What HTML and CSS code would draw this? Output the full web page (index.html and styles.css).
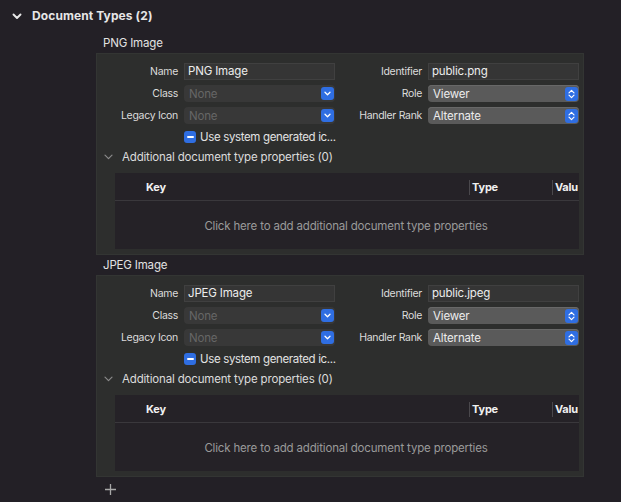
FILE: index.html
```html
<!DOCTYPE html>
<html>
<head>
<meta charset="utf-8">
<link rel="stylesheet" href="styles.css">
</head>
<body>
<div class="header">
  <svg class="hchev" width="10" height="7" viewBox="0 0 10 7"><path d="M1.5 1.5 L5 5 L8.5 1.5" fill="none" stroke="#e8e8e8" stroke-width="1.9" stroke-linecap="round" stroke-linejoin="round"/></svg>
  <span class="htitle">Document Types (2)</span>
</div>

<div class="section">
  <div class="stitle">PNG Image</div>
  <div class="panel">
    <div class="form">
      <div class="lbl">Name</div>
      <div class="tfield">PNG Image</div>
      <div class="lbl">Identifier</div>
      <div class="tfield">public.png</div>

      <div class="lbl">Class</div>
      <div class="popup dis"><span>None</span><span class="pbtn"><svg width="7" height="5" viewBox="0 0 7 5"><path d="M1 1.2 L3.5 3.7 L6 1.2" fill="none" stroke="#fff" stroke-width="1.3" stroke-linecap="round" stroke-linejoin="round"/></svg></span></div>
      <div class="lbl">Role</div>
      <div class="popup en"><span>Viewer</span><span class="pbtn"><svg width="7" height="10" viewBox="0 0 7 10"><path d="M1 3.8 L3.5 1.3 L6 3.8 M1 6.2 L3.5 8.7 L6 6.2" fill="none" stroke="#fff" stroke-width="1.2" stroke-linecap="round" stroke-linejoin="round"/></svg></span></div>

      <div class="lbl">Legacy Icon</div>
      <div class="popup dis"><span>None</span><span class="pbtn"><svg width="7" height="5" viewBox="0 0 7 5"><path d="M1 1.2 L3.5 3.7 L6 1.2" fill="none" stroke="#fff" stroke-width="1.3" stroke-linecap="round" stroke-linejoin="round"/></svg></span></div>
      <div class="lbl">Handler Rank</div>
      <div class="popup en"><span>Alternate</span><span class="pbtn"><svg width="7" height="10" viewBox="0 0 7 10"><path d="M1 3.8 L3.5 1.3 L6 3.8 M1 6.2 L3.5 8.7 L6 6.2" fill="none" stroke="#fff" stroke-width="1.2" stroke-linecap="round" stroke-linejoin="round"/></svg></span></div>

      <div></div>
      <div class="check"><span class="cbox"><span class="dash"></span></span><span class="ctext">Use system generated ic...</span></div>
    </div>
    <div class="addrow">
      <svg class="achev" width="9" height="6" viewBox="0 0 9 6"><path d="M1 1.2 L4.5 4.7 L8 1.2" fill="none" stroke="#8a8a8a" stroke-width="1.2" stroke-linecap="round" stroke-linejoin="round"/></svg>
      <span>Additional document type properties (0)</span>
    </div>
    <div class="table">
      <div class="thead">
        <div class="th key">Key</div>
        <div class="th type">Type</div>
        <div class="th val">Valu</div>
      </div>
      <div class="tbody">Click here to add additional document type properties</div>
    </div>
  </div>
</div>

<div class="section">
  <div class="stitle">JPEG Image</div>
  <div class="panel">
    <div class="form">
      <div class="lbl">Name</div>
      <div class="tfield">JPEG Image</div>
      <div class="lbl">Identifier</div>
      <div class="tfield">public.jpeg</div>

      <div class="lbl">Class</div>
      <div class="popup dis"><span>None</span><span class="pbtn"><svg width="7" height="5" viewBox="0 0 7 5"><path d="M1 1.2 L3.5 3.7 L6 1.2" fill="none" stroke="#fff" stroke-width="1.3" stroke-linecap="round" stroke-linejoin="round"/></svg></span></div>
      <div class="lbl">Role</div>
      <div class="popup en"><span>Viewer</span><span class="pbtn"><svg width="7" height="10" viewBox="0 0 7 10"><path d="M1 3.8 L3.5 1.3 L6 3.8 M1 6.2 L3.5 8.7 L6 6.2" fill="none" stroke="#fff" stroke-width="1.2" stroke-linecap="round" stroke-linejoin="round"/></svg></span></div>

      <div class="lbl">Legacy Icon</div>
      <div class="popup dis"><span>None</span><span class="pbtn"><svg width="7" height="5" viewBox="0 0 7 5"><path d="M1 1.2 L3.5 3.7 L6 1.2" fill="none" stroke="#fff" stroke-width="1.3" stroke-linecap="round" stroke-linejoin="round"/></svg></span></div>
      <div class="lbl">Handler Rank</div>
      <div class="popup en"><span>Alternate</span><span class="pbtn"><svg width="7" height="10" viewBox="0 0 7 10"><path d="M1 3.8 L3.5 1.3 L6 3.8 M1 6.2 L3.5 8.7 L6 6.2" fill="none" stroke="#fff" stroke-width="1.2" stroke-linecap="round" stroke-linejoin="round"/></svg></span></div>

      <div></div>
      <div class="check"><span class="cbox"><span class="dash"></span></span><span class="ctext">Use system generated ic...</span></div>
    </div>
    <div class="addrow">
      <svg class="achev" width="9" height="6" viewBox="0 0 9 6"><path d="M1 1.2 L4.5 4.7 L8 1.2" fill="none" stroke="#8a8a8a" stroke-width="1.2" stroke-linecap="round" stroke-linejoin="round"/></svg>
      <span>Additional document type properties (0)</span>
    </div>
    <div class="table">
      <div class="thead">
        <div class="th key">Key</div>
        <div class="th type">Type</div>
        <div class="th val">Valu</div>
      </div>
      <div class="tbody">Click here to add additional document type properties</div>
    </div>
  </div>
</div>

<div class="addbar">
  <svg width="13" height="13" viewBox="0 0 13 13"><path d="M6.5 1 V12 M1 6.5 H12" stroke="#a8a8a8" stroke-width="1.3"/></svg>
</div>
</body>
</html>
```

FILE: styles.css
```css
* { box-sizing: border-box; }
html, body {
  margin: 0;
  padding: 0;
  background: #232026;
  font-family: Inter, "Noto Sans", "Liberation Sans", sans-serif;
  color: #dedede;
  overflow: hidden;
}
body { width: 621px; height: 502px; }

.header {
  height: 33px;
  display: flex;
  align-items: flex-start;
  padding-top: 9px;
  padding-left: 12px;
}
.hchev { margin-top: 4px; }
.htitle {
  margin-left: 10px;
  font-size: 12px;
  font-weight: 700;
  color: #e6e6e6;
  line-height: 14px;
  letter-spacing: 0.1px;
}

.section {
  margin-left: 96px;
  width: 488px;
}
.stitle {
  height: 20px;
  padding-left: 7px;
  font-size: 11.5px;
  letter-spacing: -0.17px;
  line-height: 20px;
  color: #e2e2e2;
}
.panel {
  background: #2d2e2d;
  border: 1px solid #333533;
  padding: 9px 4px 5px 0;
  height: 202px;
}

.form {
  display: grid;
  grid-template-columns: 81px 151px 81px 151px;
  grid-auto-rows: 17px;
  column-gap: 6px;
  row-gap: 5px;
}
.lbl {
  text-align: right;
  font-size: 10.5px;
  letter-spacing: -0.3px;
  line-height: 17px;
  color: #dcdcdc;
  white-space: nowrap;
}
.tfield {
  background: #353535;
  border: 1px solid #404040;
  font-size: 11.5px;
  letter-spacing: -0.17px;
  line-height: 15px;
  padding-left: 3px;
  color: #ececec;
}
.popup {
  display: flex;
  align-items: center;
  justify-content: space-between;
  border-radius: 4px;
  font-size: 11.5px;
  letter-spacing: -0.17px;
  padding-left: 5px;
  padding-right: 1px;
}
.popup.dis {
  background: #383838;
  color: #666;
}
.popup.en {
  background: #5a5a5a;
  color: #ececec;
  box-shadow: inset 0 1px 0 #686868;
}
.pbtn {
  width: 13px;
  height: 14px;
  border-radius: 3px;
  background: #2f6ee2;
  display: flex;
  align-items: center;
  justify-content: center;
}
.popup.dis .pbtn { height: 13px; }

.check {
  display: flex;
  align-items: center;
  gap: 4px;
  min-width: 0;
  margin-top: -1px;
}
.cbox {
  width: 12px;
  height: 12px;
  border-radius: 3px;
  background: #2f6ee2;
  display: flex;
  align-items: center;
  justify-content: center;
  flex: none;
}
.dash {
  width: 7px;
  height: 2px;
  background: #fff;
  border-radius: 1px;
}
.ctext {
  font-size: 11.5px;
  letter-spacing: -0.35px;
  color: #e2e2e2;
  white-space: nowrap;
}

.addrow {
  display: flex;
  align-items: center;
  height: 18px;
  margin-top: 2px;
  padding-left: 7px;
  font-size: 11.5px;
  letter-spacing: -0.17px;
  color: #dcdcdc;
}
.achev { margin-right: 9px; }

.table {
  margin-top: 7px;
  margin-left: 18px;
  width: 464px;
  height: 76px;
  background: #252227;
  display: flex;
  flex-direction: column;
  overflow: hidden;
}
.thead {
  height: 28px;
  padding-top: 2px;
  border-bottom: 1px solid #3a383c;
  display: flex;
  align-items: center;
  flex: none;
}
.th {
  font-size: 11px;
  font-weight: 700;
  letter-spacing: -0.2px;
  color: #f0f0f0;
  white-space: nowrap;
  height: 15px;
  line-height: 15px;
}
.key { width: 354px; padding-left: 31px; }
.type { width: 83px; border-left: 1px solid #4a484c; padding-left: 2px; }
.val { width: 27px; border-left: 1px solid #4a484c; padding-left: 2px; }
.tbody {
  flex: 1;
  display: flex;
  align-items: center;
  justify-content: center;
  padding-top: 1px;
  font-size: 11.5px;
  letter-spacing: -0.17px;
  color: #9a9a9a;
  padding-right: 2px;
}

.addbar {
  margin-left: 104px;
  margin-top: 3px;
  height: 14px;
}
```
